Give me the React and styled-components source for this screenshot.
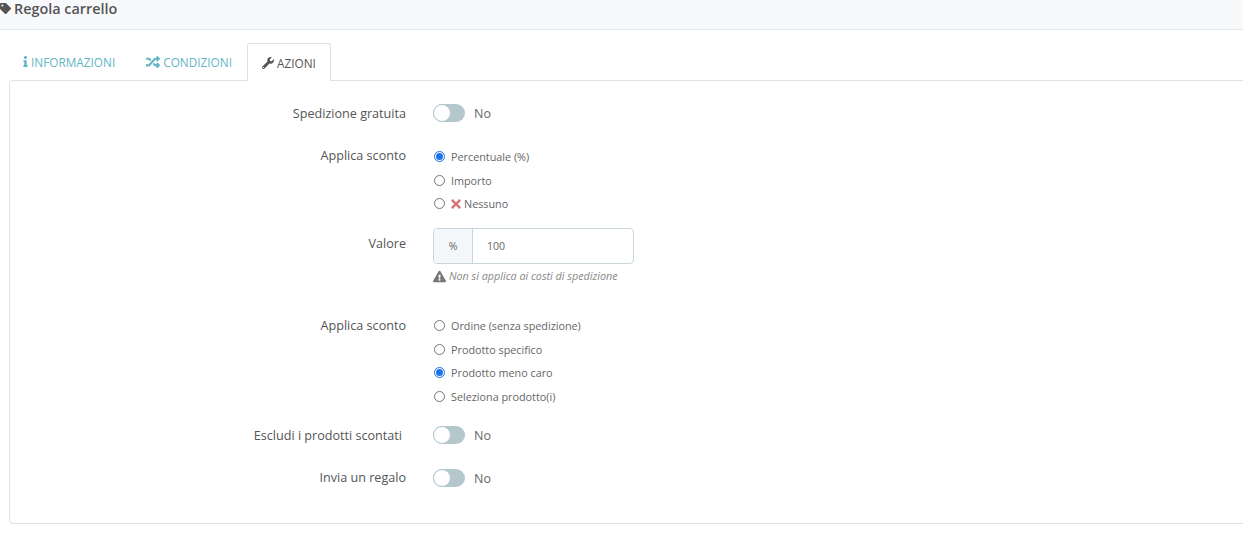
import React from 'react';
import styled, { createGlobalStyle } from 'styled-components';
import { FaTag, FaInfo, FaRandom, FaWrench, FaTimes, FaExclamationTriangle } from 'react-icons/fa';

const GlobalStyle = createGlobalStyle`
  html, body {
    margin: 0;
    padding: 0;
    background: #fff;
    overflow: hidden;
  }
  body {
    font-family: "Open Sans", "Liberation Sans", sans-serif;
    font-size: 12px;
    color: #555;
  }
`;

const Page = styled.div`
  width: 1243px;
  height: 537px;
  overflow: hidden;
`;

const Header = styled.div`
  height: 30px;
  box-sizing: border-box;
  background: #f8f9fb;
  border-bottom: 1px solid #e3e6e8;
  display: flex;
  align-items: flex-start;
  gap: 3px;
  padding: 0;
  font-size: 14.4px;
  font-weight: 600;
  line-height: 17px;
  color: #555;
  svg {
    width: 11px;
    height: 11px;
    margin-top: 3px;
    color: #555;
  }
`;

const Tabs = styled.div`
  display: flex;
  margin: 13px 0 0 9px;
  height: 37px;
`;

const Tab = styled.div`
  box-sizing: border-box;
  height: ${(p) => (p.$active ? '38px' : '37px')};
  padding: 0 14px;
  margin-right: ${(p) => p.$gap || 0}px;
  display: flex;
  align-items: center;
  gap: 3px;
  font-size: 11.8px;
  color: ${(p) => (p.$active ? '#555' : '#5fb5c4')};
  background: #fff;
  border: ${(p) => (p.$active ? '1px solid #dfe2e4' : 'none')};
  border-bottom: none;
  border-radius: 3px 3px 0 0;
  position: relative;
  z-index: 1;
  svg {
    width: ${(p) => p.$iconW}px;
    height: ${(p) => p.$iconH}px;
  }
`;

const Panel = styled.div`
  box-sizing: border-box;
  margin-left: 9px;
  width: 1250px;
  height: 444px;
  border: 1px solid #dfe2e4;
  border-radius: 4px;
  padding-top: 17px;
`;

const Row = styled.div`
  display: grid;
  grid-template-columns: 396px 1fr;
  column-gap: 27px;
  margin-bottom: ${(p) => p.$mb}px;
`;

const Label = styled.div`
  text-align: right;
  font-size: 12.6px;
  line-height: 30px;
  padding-top: ${(p) => p.$pt ?? 1}px;
  color: #555;
  padding-right: ${(p) => p.$pr || 0}px;
`;

const SwitchWrap = styled.div`
  display: flex;
  align-items: center;
  height: 30px;
  gap: 9px;
  font-size: 12.5px;
  color: #666;
`;

const SwitchTrack = styled.span`
  width: 32px;
  height: 18px;
  box-sizing: border-box;
  border-radius: 9px;
  background: #b3c7cd;
  position: relative;
  display: inline-block;
`;

const SwitchKnob = styled.span`
  position: absolute;
  left: 0;
  top: 0;
  width: 18px;
  height: 18px;
  box-sizing: border-box;
  border-radius: 50%;
  background: #fff;
  border: 1px solid #b3c7cd;
`;

const RadioList = styled.div`
  display: flex;
  flex-direction: column;
  padding-top: ${(p) => p.$pt || 0}px;
`;

const RadioRow = styled.label`
  display: flex;
  align-items: center;
  height: 23.6px;
  gap: 6px;
  font-size: 10.8px;
  color: #666;
`;

const RadioDot = styled.span`
  width: 11px;
  height: 11px;
  margin-left: 1px;
  box-sizing: border-box;
  border-radius: 50%;
  border: 1px solid ${(p) => (p.$on ? '#1a73e8' : '#767676')};
  background: #fff;
  display: inline-flex;
  align-items: center;
  justify-content: center;
  &::after {
    content: '';
    display: ${(p) => (p.$on ? 'block' : 'none')};
    width: 7px;
    height: 7px;
    border-radius: 50%;
    background: #1a73e8;
  }
`;

const CrossIcon = styled(FaTimes)`
  width: 10px;
  height: 14px;
  color: #d4797f;
  margin-right: -3px;
`;

const InputGroup = styled.div`
  display: flex;
  width: 201px;
  height: 36px;
  box-sizing: border-box;
  border: 1px solid #c8d6db;
  border-radius: 4px;
  font-size: 10.5px;
  color: #666;
`;

const Addon = styled.div`
  width: 38px;
  background: #f3f7f9;
  border-right: 1px solid #c8d6db;
  border-radius: 3px 0 0 3px;
  display: flex;
  align-items: center;
  justify-content: center;
`;

const InputValue = styled.div`
  flex: 1;
  padding-left: 14px;
  display: flex;
  align-items: center;
`;

const Help = styled.div`
  display: flex;
  align-items: center;
  gap: 3px;
  height: 25px;
  font-size: 10.75px;
  font-style: italic;
  color: #888;
  svg {
    width: 13px;
    height: 13px;
    color: #777;
  }
`;

export default function App() {
  return (
    <Page>
      <GlobalStyle />
      <Header>
        <FaTag />
        Regola carrello
      </Header>
      <Tabs>
        <Tab $gap={3} $iconW={5} $iconH={11}><FaInfo />INFORMAZIONI</Tab>
        <Tab $gap={1} $iconW={14} $iconH={14}><FaRandom />CONDIZIONI</Tab>
        <Tab $active $iconW={12} $iconH={12}><FaWrench />AZIONI</Tab>
      </Tabs>
      <Panel>
        <Row $mb={11}>
          <Label>Spedizione gratuita</Label>
          <SwitchWrap>
            <SwitchTrack><SwitchKnob /></SwitchTrack>
            No
          </SwitchWrap>
        </Row>
        <Row $mb={12}>
          <Label>Applica sconto</Label>
          <RadioList $pt={5}>
            <RadioRow><RadioDot $on />Percentuale (%)</RadioRow>
            <RadioRow><RadioDot />Importo</RadioRow>
            <RadioRow><RadioDot /><CrossIcon />Nessuno</RadioRow>
          </RadioList>
        </Row>
        <Row $mb={22}>
          <Label>Valore</Label>
          <div>
            <InputGroup>
              <Addon>%</Addon>
              <InputValue>100</InputValue>
            </InputGroup>
            <Help><FaExclamationTriangle />Non si applica ai costi di spedizione</Help>
          </div>
        </Row>
        <Row $mb={12}>
          <Label $pt={0}>Applica sconto</Label>
          <RadioList $pt={3}>
            <RadioRow><RadioDot />Ordine (senza spedizione)</RadioRow>
            <RadioRow><RadioDot />Prodotto specifico</RadioRow>
            <RadioRow><RadioDot $on />Prodotto meno caro</RadioRow>
            <RadioRow><RadioDot />Seleziona prodotto(i)</RadioRow>
          </RadioList>
        </Row>
        <Row $mb={12}>
          <Label $pr={4}>Escludi i prodotti scontati</Label>
          <SwitchWrap>
            <SwitchTrack><SwitchKnob /></SwitchTrack>
            No
          </SwitchWrap>
        </Row>
        <Row $mb={0}>
          <Label $pt={0}>Invia un regalo</Label>
          <SwitchWrap>
            <SwitchTrack><SwitchKnob /></SwitchTrack>
            No
          </SwitchWrap>
        </Row>
      </Panel>
    </Page>
  );
}
